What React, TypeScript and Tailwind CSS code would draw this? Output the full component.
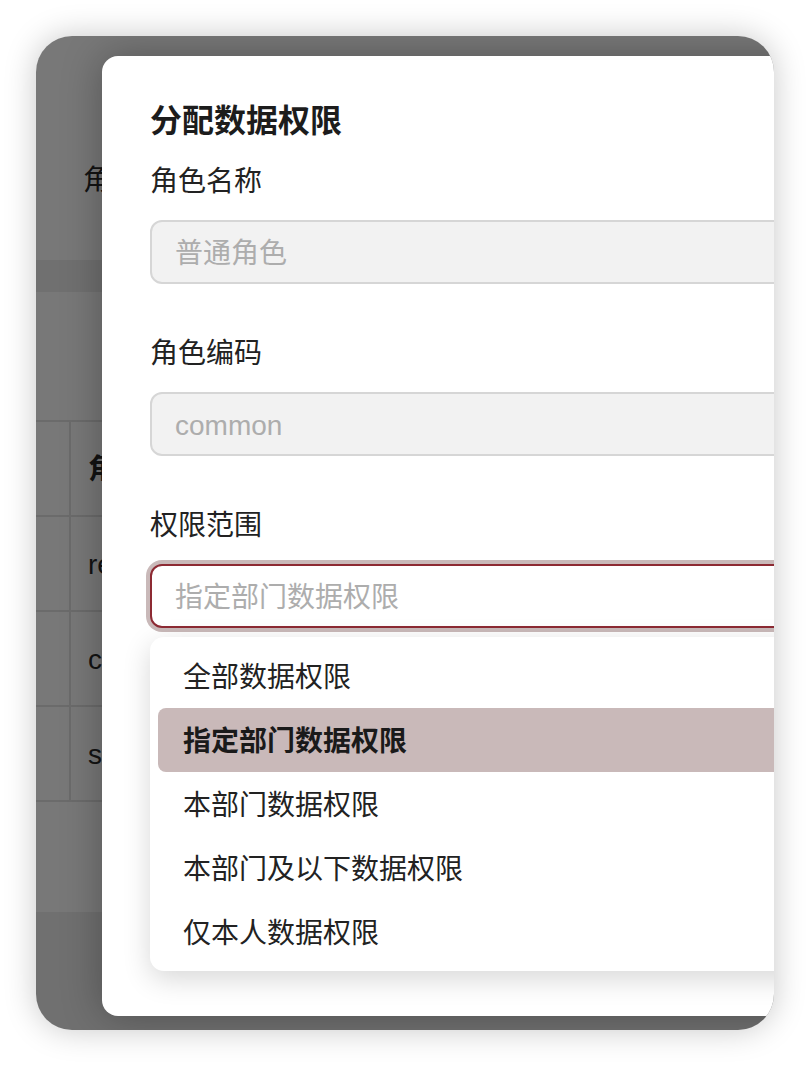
import React from "react";

const FONT = { fontFamily: '"Liberation Sans", "Noto Sans CJK SC", sans-serif' };

function Field({ label, value, top }: { label: string; value: string; top: string }) {
  return (
    <div className={top}>
      <div className="text-[28px] leading-[40px] pt-[1px] text-[#222]">{label}</div>
      <div className="mt-[18px] h-[64px] w-full rounded-[12px] border-2 border-[#d6d6d6] bg-[#f2f2f2] px-[23px] pt-[3px] flex items-center text-[28px] text-[#adadad]">
        {value}
      </div>
    </div>
  );
}

const options = ["全部数据权限", "指定部门数据权限", "本部门数据权限", "本部门及以下数据权限", "仅本人数据权限"];

export default function App() {
  return (
    <div className="w-[810px] h-[1066px] bg-white p-[36px]" style={FONT}>
      <div className="relative w-[738px] h-[994px] rounded-[36px] overflow-hidden bg-[#efefef] shadow-[0_0_32px_rgba(0,0,0,0.22)]">
        {/* underlying page */}
        <div className="flex flex-col h-full">
          <div className="h-[224px] bg-white flex items-center pl-[47px] pt-[66px]">
            <span className="text-[28px] text-[#2a2a2a]">角</span>
          </div>
          <div className="h-[32px]" />
          <div className="h-[620px] bg-white pt-[128px]">
            <div className="border-t-2 border-[#e4e4e4]">
              {[
                { t: "角", b: true },
                { t: "re", b: false },
                { t: "c", b: false },
                { t: "s", b: false },
              ].map((r, i) => (
                <div key={i} className="flex h-[95px] border-b-2 border-[#e4e4e4]">
                  <div className="w-[35px] border-r-2 border-[#e4e4e4]" />
                  <div className={"flex items-center pl-[17px] pt-[3px] text-[28px] text-[#2a2a2a] " + (r.b ? "font-bold" : "")}>
                    {r.t}
                  </div>
                </div>
              ))}
            </div>
          </div>
        </div>

        {/* overlay */}
        <div className="absolute inset-0 bg-black/[0.53]" />

        {/* modal */}
        <div className="absolute left-[66px] top-[20px] w-[760px] h-[960px] rounded-[16px] bg-white shadow-[0_0_40px_rgba(0,0,0,0.3)] pt-[45px] px-[48px]">
          <h2 className="text-[32px] leading-[40px] font-bold text-[#1c1c1c]">分配数据权限</h2>
          <Field label="角色名称" value="普通角色" top="mt-[20px]" />
          <Field label="角色编码" value="common" top="mt-[49px]" />
          <div className="mt-[49px]">
            <div className="text-[28px] leading-[40px] pt-[1px] text-[#222]">权限范围</div>
            <div className="relative mt-[18px]">
              <div className="h-[64px] w-full rounded-[12px] border-2 border-[#8d2a33] ring-4 ring-[#c9b9b9] bg-white px-[23px] pt-[3px] flex items-center text-[28px] text-[#adadad]">
                指定部门数据权限
              </div>
              <div className="absolute left-0 top-[73px] w-full rounded-[14px] bg-white py-[7px] shadow-[0_8px_28px_rgba(0,0,0,0.16)]">
                {options.map((o, i) => (
                  <div
                    key={o}
                    className={
                      "h-[64px] mx-[8px] rounded-[8px] flex items-center pl-[25px] pt-[3px] text-[28px] " +
                      (i === 1 ? "bg-[#c9b9b9] font-bold text-[#1a1a1a]" : "text-[#222]")
                    }
                  >
                    {o}
                  </div>
                ))}
              </div>
            </div>
          </div>
        </div>
      </div>
    </div>
  );
}
